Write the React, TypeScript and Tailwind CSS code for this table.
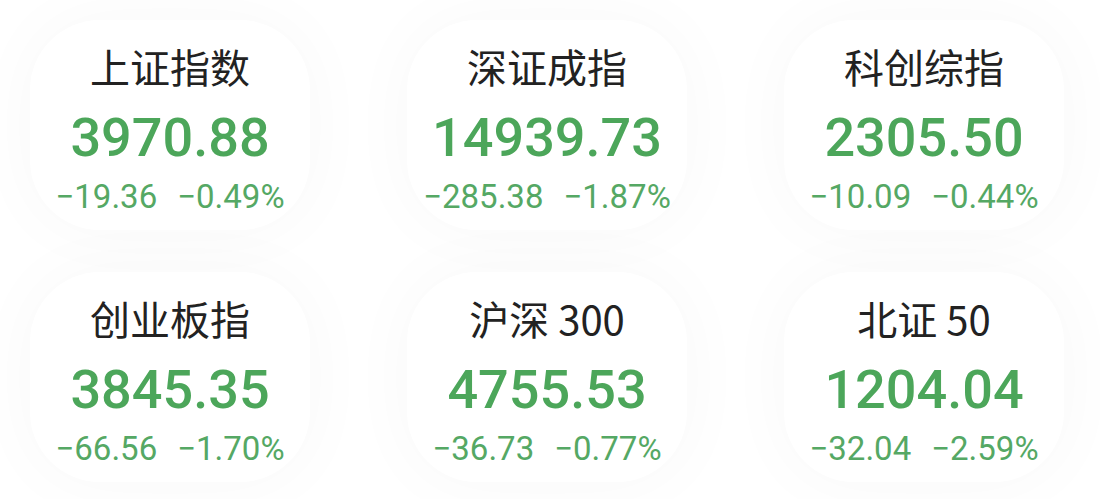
const indices = [
  { name: "上证指数", value: "3970.88", change: "−19.36", pct: "−0.49%" },
  { name: "深证成指", value: "14939.73", change: "−285.38", pct: "−1.87%" },
  { name: "科创综指", value: "2305.50", change: "−10.09", pct: "−0.44%" },
  { name: "创业板指", value: "3845.35", change: "−66.56", pct: "−1.70%" },
  { name: "沪深 300", value: "4755.53", change: "−36.73", pct: "−0.77%" },
  { name: "北证 50", value: "1204.04", change: "−32.04", pct: "−2.59%" },
];

function IndexCard({ item }: { item: (typeof indices)[number] }) {
  return (
    <div className="flex h-[210px] flex-col items-center rounded-[70px] bg-white pt-[22px] shadow-[0_0_70px_rgba(0,0,0,0.03)]">
      <div className="font-['Noto_Sans_CJK_SC',sans-serif] text-[40px] leading-[48px] font-normal text-[#222]">
        {item.name}
      </div>
      <div className="mt-[18px] font-['Roboto',sans-serif] text-[54px] leading-[60px] font-medium text-[#4ca65a]">
        {item.value}
      </div>
      <div className="mt-[9px] flex gap-[20px] font-['Roboto',sans-serif] text-[33px] leading-[40px] font-normal text-[#55a864]">
        <span>{item.change}</span>
        <span>{item.pct}</span>
      </div>
    </div>
  );
}

export default function App() {
  return (
    <div className="h-[499px] w-[1100px] overflow-hidden bg-white">
      <div className="grid grid-cols-[repeat(3,280px)] gap-x-[97px] gap-y-[42px] pt-[20px] pl-[30px]">
        {indices.map((item) => (
          <IndexCard key={item.name} item={item} />
        ))}
      </div>
    </div>
  );
}
